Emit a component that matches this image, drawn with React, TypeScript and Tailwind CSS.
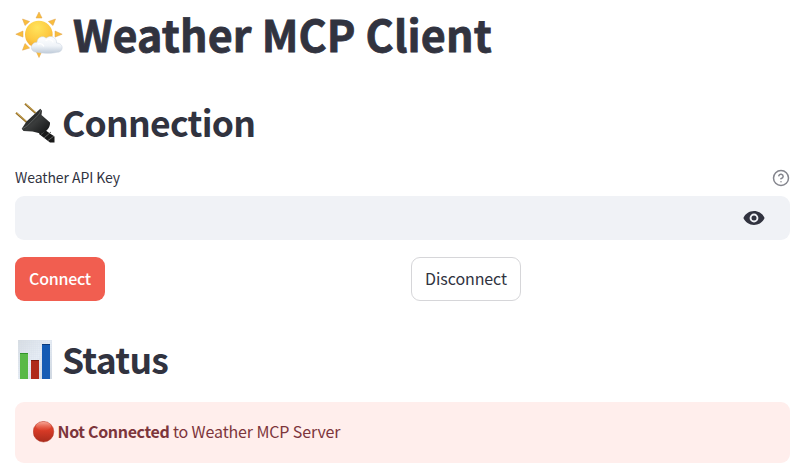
function SunCloud() {
  return (
    <svg className="h-12 w-12 shrink-0" viewBox="0 0 48 48">
      <defs>
        <radialGradient id="sun" cx="0.45" cy="0.25" r="0.8">
          <stop offset="0" stopColor="#ffe45c" />
          <stop offset="0.6" stopColor="#fdc840" />
          <stop offset="1" stopColor="#f0a02e" />
        </radialGradient>
        <linearGradient id="cloud" x1="0" y1="0" x2="0" y2="1">
          <stop offset="0" stopColor="#ffffff" />
          <stop offset="0.55" stopColor="#eff3f8" />
          <stop offset="1" stopColor="#bfcbd9" />
        </linearGradient>
      </defs>
      <g fill="#f9bd3c" stroke="#dfa04a" strokeWidth="0.5">
        <path d="M24 1 27 7H21Z" />
        <path d="M24 46.500 21 40h6Z" />
        <path d="M.8 23.200 8 20V26.100Z" />
        <path d="M47.200 23.200 40 20v6.100Z" />
        <path d="M7.500 8 14.600 10.500 10 14.500Z" />
        <path d="M40.500 8 33.400 10.500 38 14.500Z" />
        <path d="M7.500 39.200 10 32.500 14.600 37Z" />
      </g>
      <circle cx="23.800" cy="23.500" r="13.800" fill="url(#sun)" />
      <path d="M22 41.300C14.500 41.300 14.500 31.500 22 31.200 22.500 25.500 28.500 24.500 31 27.200 35.500 23.500 42 26.500 41.500 32 49.200 32 48.700 41.500 42 41.300 36 43 28 42.300 22 41.300Z" fill="url(#cloud)" stroke="#c6d0dc" strokeWidth="0.5" />
      <path d="M23 33c3-.8 5 .5 5.700 2M31 29.500c2.500-2 6-1 7 1.500" fill="none" stroke="#fff" strokeWidth="1.300" strokeLinecap="round" />
    </svg>
  );
}

function Plug() {
  return (
    <svg className="h-10 w-10 shrink-0 overflow-visible" viewBox="0 0 40 40">
      <defs>
        <linearGradient id="plug" x1="0" y1="0" x2="1" y2="1">
          <stop offset="0.2" stopColor="#1a1b1b" />
          <stop offset="0.5" stopColor="#3a3c3c" />
          <stop offset="1" stopColor="#101112" />
        </linearGradient>
      </defs>
      <path d="M1 8.800 11.500 18M10 -.2 20.500 9" stroke="#8f6b25" strokeWidth="1.900" />
      <path d="M1 8.300 11.500 17.500M10 -.7 20.500 8.500" stroke="#dfba65" strokeWidth="0.800" />
      <path d="m27 24 12.500 8.500v6H35L24 30Z" fill="#191919" />
      <path d="m26 30.500 6-5.500M29 34l7-6M33 36.500l6-4.500" stroke="#626262" strokeWidth="1" />
      <path d="M25.300 4.800 27 6.700 26.500 11 35 18.500C35.500 23.500 31 28.500 25.500 29.500L17.500 27.500 8.500 27 6.700 24.800 11.500 17.500Z" fill="url(#plug)" />
      <path d="M7.500 24.800 12.700 21.500 23.800 10.500 26 6" fill="none" stroke="#606363" strokeWidth="0.900" />
    </svg>
  );
}

function Chart() {
  return (
    <svg className="h-10 w-10 shrink-0" viewBox="0 0 40 40">
      <defs>
        <linearGradient id="paper" x1="0" y1="0" x2="1" y2="1">
          <stop offset="0" stopColor="#d7dde3" />
          <stop offset="0.5" stopColor="#e6edf5" />
          <stop offset="1" stopColor="#cfd7e0" />
        </linearGradient>
        <pattern id="grid" width="2" height="2" patternUnits="userSpaceOnUse">
          <path d="M0 0H2M0 0V2" stroke="#cfd9e4" strokeWidth="0.300" />
        </pattern>
      </defs>
      <path fill="url(#paper)" d="M3 0h34v39H3z" />
      <path fill="url(#grid)" d="M3 0h34v39H3z" />
      <path fill="#59b947" d="M5 13h8v26H5z" />
      <path fill="#af2b1b" d="M16 20h8v19h-8z" />
      <path fill="#155bb4" d="M27 4h8v35h-8z" />
      <path d="M5 13.500h8" stroke="#31932a" />
      <path d="M16 20.500h8" stroke="#7b190d" />
      <path d="M27 4.500h8" stroke="#0d3b7b" />
    </svg>
  );
}

function RedCircle() {
  return (
    <svg className="mb-[2px] h-[22px] w-[22px] shrink-0" viewBox="0 0 22 22">
      <defs>
        <linearGradient id="red" x1="0" y1="0" x2="0" y2="1">
          <stop offset="0" stopColor="#e9563f" />
          <stop offset="0.45" stopColor="#d63a26" />
          <stop offset="1" stopColor="#a92b1c" />
        </linearGradient>
        <linearGradient id="shine" x1="0" y1="0" x2="0" y2="1">
          <stop offset="0" stopColor="#f5a595" />
          <stop offset="1" stopColor="#e45540" stopOpacity="0.200" />
        </linearGradient>
      </defs>
      <circle cx="10.500" cy="10.700" r="10.300" fill="url(#red)" stroke="#b03425" strokeWidth="0.500" />
      <ellipse cx="10.500" cy="5.300" rx="7.500" ry="4.200" fill="url(#shine)" />
    </svg>
  );
}

function HelpIcon() {
  return (
    <svg className="h-[18px] w-[18px]" viewBox="0 0 18 18" fill="none" stroke="#84858d" strokeWidth="1.500" strokeLinecap="round" strokeLinejoin="round">
      <circle cx="9" cy="9" r="7.500" />
      <path d="M6.800 6.800a2.250 2.250 0 0 1 4.370.75c0 1.500-2.250 2.250-2.250 2.250M9 12.800h.01" />
    </svg>
  );
}

function EyeIcon() {
  return (
    <svg className="h-[22px] w-[22px]" viewBox="0 0 22 22">
      <path fill="#31333f" fillRule="evenodd" d="M11 4.100C6.300 4.100 2.200 6.900.4 11c1.800 4.100 5.900 6.900 10.600 6.900s8.800-2.800 10.600-6.900C19.800 6.900 15.700 4.100 11 4.100Zm0 2.500a4.400 4.400 0 1 1 0 8.800 4.400 4.400 0 0 1 0-8.800Z" />
      <circle cx="11" cy="11" r="2.500" fill="#31333f" />
    </svg>
  );
}

export default function App() {
  return (
    <main className="flex h-[474px] w-[799px] flex-col overflow-hidden whitespace-nowrap bg-white pl-[15px] pr-[9px] font-['Noto_Sans_CJK_SC','Noto_Sans_CJK_JP',sans-serif] text-[#31333f]">
      <h1 className="mt-[11px] flex h-12 items-center gap-[10px] text-[43px] font-bold leading-[48px] tracking-[0.15px]">
        <SunCloud />
        <span className="pb-[5px] [-webkit-text-stroke:0.8px_#31333f]">Weather MCP Client</span>
      </h1>
      <h2 className="mt-[43px] flex h-11 items-center gap-[7px] text-[35.5px] font-semibold leading-[44px] tracking-[-0.75px]">
        <Plug />
        <span className="pb-[5px]">Connection</span>
      </h2>
      <div className="mt-[22px] flex h-5 items-center justify-between text-[14px] leading-5">
        <label htmlFor="key" className="pb-[2px] tracking-[-0.08px]">Weather API Key</label>
        <HelpIcon />
      </div>
      <div className="mt-2 flex h-11 items-center rounded-[9px] bg-[#f0f2f6] pr-[25px]">
        <input id="key" type="password" className="h-full min-w-0 flex-1 bg-transparent px-3 outline-none" />
        <button aria-label="Show password"><EyeIcon /></button>
      </div>
      <div className="mt-[17px] grid grid-cols-2 gap-[17px] text-[16px]">
        <button className="h-11 w-[90px] rounded-[9px] bg-[#f15e50] pb-[2px] font-medium tracking-[-0.25px] text-white">Connect</button>
        <button className="h-11 w-[110px] rounded-[9px] border border-[#d6d6d9] bg-white pb-[2px] tracking-[-0.1px]">Disconnect</button>
      </div>
      <h2 className="mt-[37px] flex h-11 items-center gap-[7px] text-[35.5px] font-semibold leading-[44px] tracking-[-0.75px]">
        <Chart />
        <span className="pb-[2px]">Status</span>
      </h2>
      <div className="mt-5 flex h-[61px] items-center gap-[2.5px] rounded-[9px] bg-[#ffeeec] pl-[18px] text-[16px] text-[#7d353b]">
        <RedCircle />
        <p className="pb-[3px] tracking-[-0.13px]"><strong className="font-semibold tracking-[-0.35px]">Not Connected</strong> to Weather MCP Server</p>
      </div>
    </main>
  );
}
